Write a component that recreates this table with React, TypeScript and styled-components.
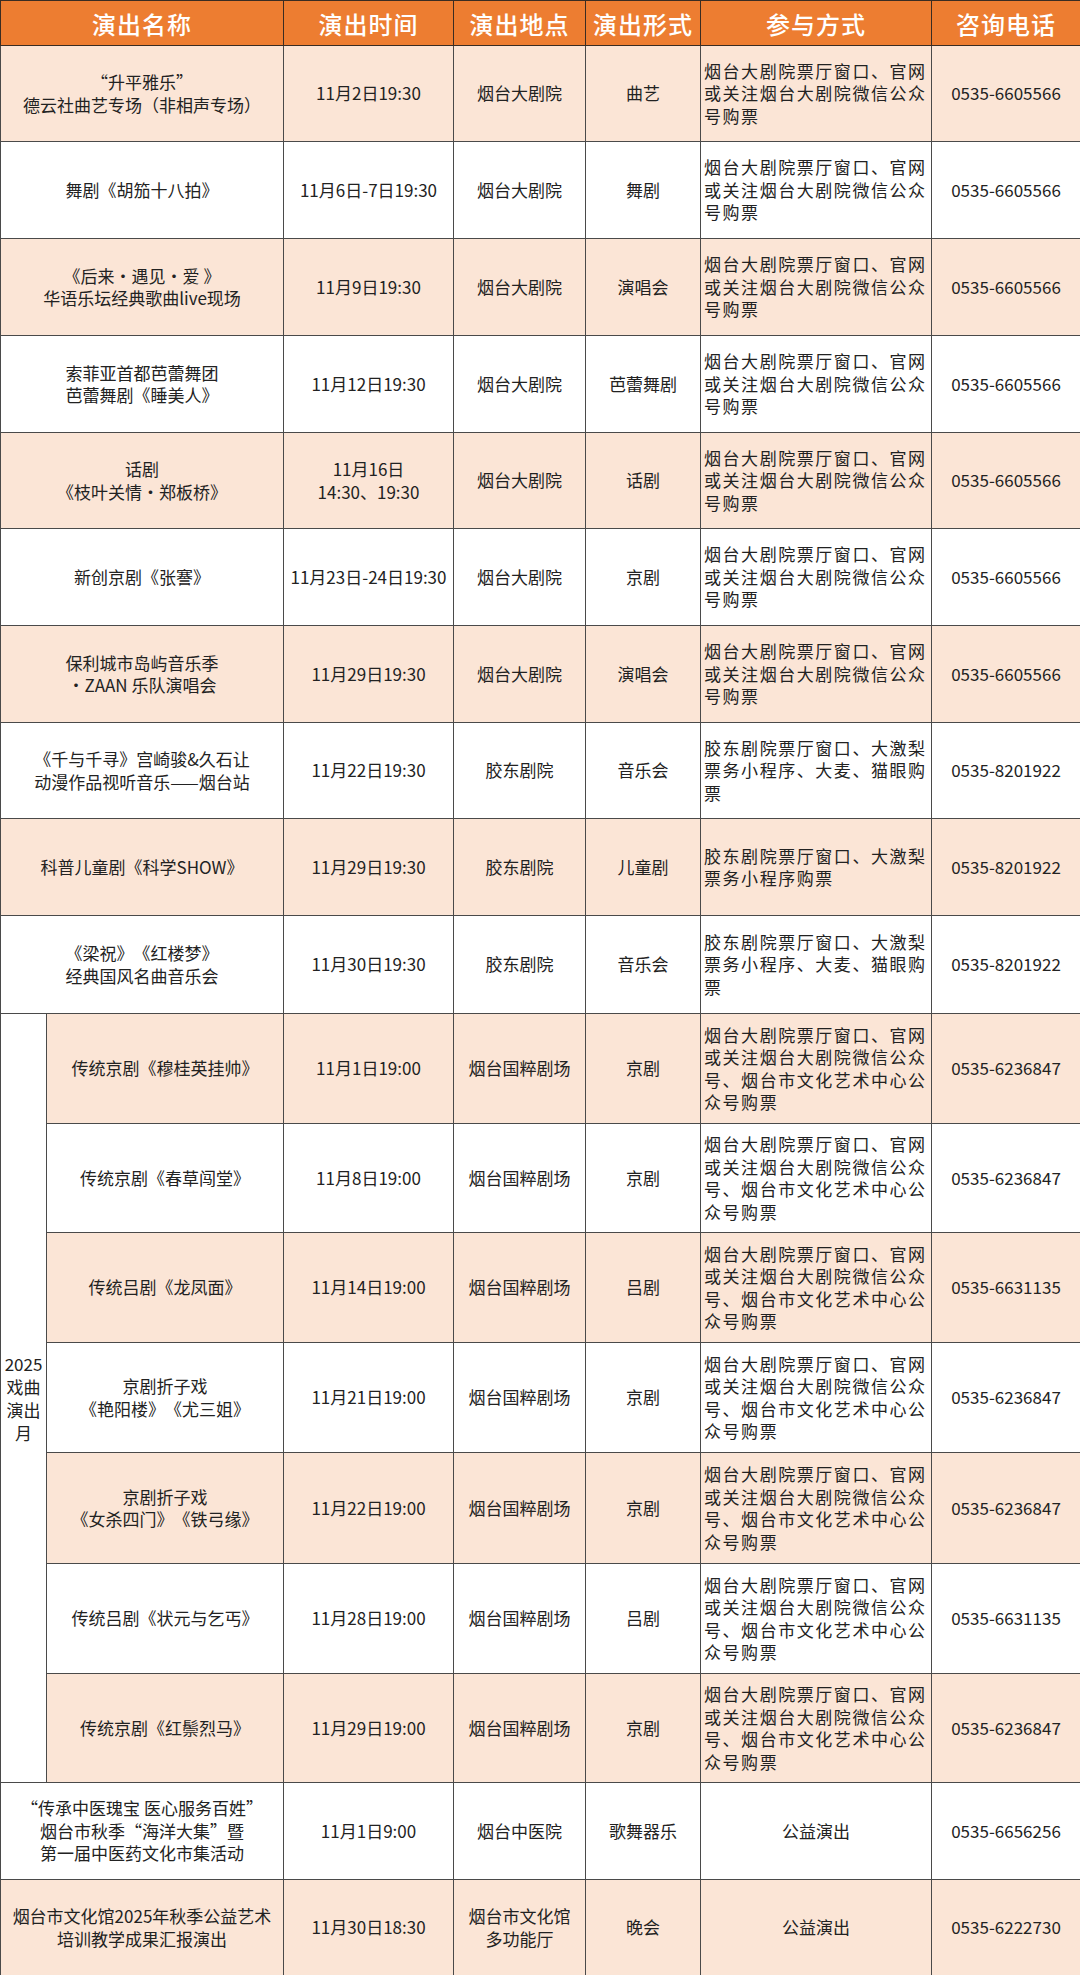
import React from 'react';
import styled, { createGlobalStyle } from 'styled-components';

// Excel-style palette: accent orange header, light tint for alternating rows
const ORANGE = '#ED7D31';
const TINT = '#FBE5D6';
const LINE = '#4a4a4a';

const GlobalStyle = createGlobalStyle`
  body {
    margin: 0;
    background: #fff;
    font-family: "Noto Sans CJK SC", "Noto Sans", sans-serif;
    color: #222;
    text-spacing-trim: space-all;
  }
`;

const Table = styled.table`
  width: 1080px;
  border-collapse: collapse;
  table-layout: fixed;
`;

const HeadCell = styled.th`
  height: 44px;
  padding: 0;
  background: ${ORANGE};
  color: #fff;
  font-size: 24px;
  font-weight: 500;
  letter-spacing: 1px;
  border: 1px solid #3a2c22;
  text-align: center;
  vertical-align: middle;
`;

const Row = styled.tr<{ $tint?: boolean; $h: number }>`
  height: ${({ $h }) => $h}px;
  background: ${({ $tint }) => ($tint ? TINT : '#fff')};
`;

const Cell = styled.td<{ $align?: 'left' | 'center' }>`
  padding: 0 2px;
  border: 1px solid ${LINE};
  font-size: 17px;
  line-height: 22.5px;
  text-align: ${({ $align }) => $align || 'center'};
  vertical-align: middle;
  white-space: nowrap;
`;

const MethodCell = styled(Cell)`
  padding: 0 3px;
  white-space: normal;
  letter-spacing: 1.55px;
`;

const GroupCell = styled.td`
  padding: 0;
  border: 1px solid ${LINE};
  background: #fff;
  font-size: 17px;
  line-height: 23px;
  text-align: center;
  vertical-align: middle;
`;

const Line = styled.div`
  display: block;
`;

const GRT = '烟台大剧院票厅窗口、官网或关注烟台大剧院微信公众号购票';
const GRT_OPERA = '烟台大剧院票厅窗口、官网或关注烟台大剧院微信公众号、烟台市文化艺术中心公众号购票';
const JD = '胶东剧院票厅窗口、大激梨票务小程序、大麦、猫眼购票';
const FREE = '公益演出';

type Show = {
  name: string[];
  time: string[];
  place: string[];
  form: string;
  method: string;
  phone: string;
  h: number;
};

const shows: Show[] = [
  { name: ['“升平雅乐”', '德云社曲艺专场（非相声专场）'], time: ['11月2日19:30'], place: ['烟台大剧院'], form: '曲艺', method: GRT, phone: '0535-6605566', h: 96 },
  { name: ['舞剧《胡笳十八拍》'], time: ['11月6日-7日19:30'], place: ['烟台大剧院'], form: '舞剧', method: GRT, phone: '0535-6605566', h: 97 },
  { name: ['《后来·遇见·爱 》', '华语乐坛经典歌曲live现场'], time: ['11月9日19:30'], place: ['烟台大剧院'], form: '演唱会', method: GRT, phone: '0535-6605566', h: 97 },
  { name: ['索菲亚首都芭蕾舞团', '芭蕾舞剧《睡美人》'], time: ['11月12日19:30'], place: ['烟台大剧院'], form: '芭蕾舞剧', method: GRT, phone: '0535-6605566', h: 97 },
  { name: ['话剧', '《枝叶关情·郑板桥》'], time: ['11月16日', '14:30、19:30'], place: ['烟台大剧院'], form: '话剧', method: GRT, phone: '0535-6605566', h: 96 },
  { name: ['新创京剧《张謇》'], time: ['11月23日-24日19:30'], place: ['烟台大剧院'], form: '京剧', method: GRT, phone: '0535-6605566', h: 97 },
  { name: ['保利城市岛屿音乐季', '·ZAAN 乐队演唱会'], time: ['11月29日19:30'], place: ['烟台大剧院'], form: '演唱会', method: GRT, phone: '0535-6605566', h: 97 },
  { name: ['《千与千寻》宫崎骏&久石让', '动漫作品视听音乐——烟台站'], time: ['11月22日19:30'], place: ['胶东剧院'], form: '音乐会', method: JD, phone: '0535-8201922', h: 96 },
  { name: ['科普儿童剧《科学SHOW》'], time: ['11月29日19:30'], place: ['胶东剧院'], form: '儿童剧', method: '胶东剧院票厅窗口、大激梨票务小程序购票', phone: '0535-8201922', h: 97 },
  { name: ['《梁祝》《红楼梦》', '经典国风名曲音乐会'], time: ['11月30日19:30'], place: ['胶东剧院'], form: '音乐会', method: JD, phone: '0535-8201922', h: 98 },
];

const operas: Show[] = [
  { name: ['传统京剧《穆桂英挂帅》'], time: ['11月1日19:00'], place: ['烟台国粹剧场'], form: '京剧', method: GRT_OPERA, phone: '0535-6236847', h: 110 },
  { name: ['传统京剧《春草闯堂》'], time: ['11月8日19:00'], place: ['烟台国粹剧场'], form: '京剧', method: GRT_OPERA, phone: '0535-6236847', h: 109 },
  { name: ['传统吕剧《龙凤面》'], time: ['11月14日19:00'], place: ['烟台国粹剧场'], form: '吕剧', method: GRT_OPERA, phone: '0535-6631135', h: 110 },
  { name: ['京剧折子戏', '《艳阳楼》《尤三姐》'], time: ['11月21日19:00'], place: ['烟台国粹剧场'], form: '京剧', method: GRT_OPERA, phone: '0535-6236847', h: 110 },
  { name: ['京剧折子戏', '《女杀四门》《铁弓缘》'], time: ['11月22日19:00'], place: ['烟台国粹剧场'], form: '京剧', method: GRT_OPERA, phone: '0535-6236847', h: 111 },
  { name: ['传统吕剧《状元与乞丐》'], time: ['11月28日19:00'], place: ['烟台国粹剧场'], form: '吕剧', method: GRT_OPERA, phone: '0535-6631135', h: 110 },
  { name: ['传统京剧《红鬃烈马》'], time: ['11月29日19:00'], place: ['烟台国粹剧场'], form: '京剧', method: GRT_OPERA, phone: '0535-6236847', h: 109 },
];

const extras: Show[] = [
  { name: ['“传承中医瑰宝 医心服务百姓”', '烟台市秋季“海洋大集”暨', '第一届中医药文化市集活动'], time: ['11月1日9:00'], place: ['烟台中医院'], form: '歌舞器乐', method: FREE, phone: '0535-6656256', h: 97 },
  { name: ['烟台市文化馆2025年秋季公益艺术', '培训教学成果汇报演出'], time: ['11月30日18:30'], place: ['烟台市文化馆', '多功能厅'], form: '晚会', method: FREE, phone: '0535-6222730', h: 96 },
];

const Lines = ({ items }: { items: string[] }) => (
  <>
    {items.map((t, i) => (
      <Line key={i}>{t}</Line>
    ))}
  </>
);

// the rest of a row after the name column(s)
const Tail = ({ s }: { s: Show }) => (
  <>
    <Cell><Lines items={s.time} /></Cell>
    <Cell><Lines items={s.place} /></Cell>
    <Cell>{s.form}</Cell>
    {s.method === FREE ? <Cell>{s.method}</Cell> : <MethodCell $align="left">{s.method}</MethodCell>}
    <Cell>{s.phone}</Cell>
  </>
);

const App: React.FC = () => (
  <>
    <GlobalStyle />
    <Table>
      <colgroup>
        <col style={{ width: 46 }} />
        <col style={{ width: 237 }} />
        <col style={{ width: 170 }} />
        <col style={{ width: 132 }} />
        <col style={{ width: 115 }} />
        <col style={{ width: 231 }} />
        <col style={{ width: 149 }} />
      </colgroup>
      <thead>
        <tr>
          <HeadCell colSpan={2}>演出名称</HeadCell>
          <HeadCell>演出时间</HeadCell>
          <HeadCell>演出地点</HeadCell>
          <HeadCell>演出形式</HeadCell>
          <HeadCell>参与方式</HeadCell>
          <HeadCell>咨询电话</HeadCell>
        </tr>
      </thead>
      <tbody>
        {shows.map((s, i) => (
          <Row key={`s${i}`} $h={s.h} $tint={i % 2 === 0}>
            <Cell colSpan={2}><Lines items={s.name} /></Cell>
            <Tail s={s} />
          </Row>
        ))}
        {operas.map((s, i) => (
          <Row key={`o${i}`} $h={s.h} $tint={i % 2 === 0}>
            {i === 0 && (
              <GroupCell rowSpan={operas.length}>
                <Lines items={['2025', '戏曲', '演出', '月']} />
              </GroupCell>
            )}
            <Cell><Lines items={s.name} /></Cell>
            <Tail s={s} />
          </Row>
        ))}
        {extras.map((s, i) => (
          <Row key={`e${i}`} $h={s.h} $tint={i % 2 === 1}>
            <Cell colSpan={2}><Lines items={s.name} /></Cell>
            <Tail s={s} />
          </Row>
        ))}
      </tbody>
    </Table>
  </>
);

export default App;
